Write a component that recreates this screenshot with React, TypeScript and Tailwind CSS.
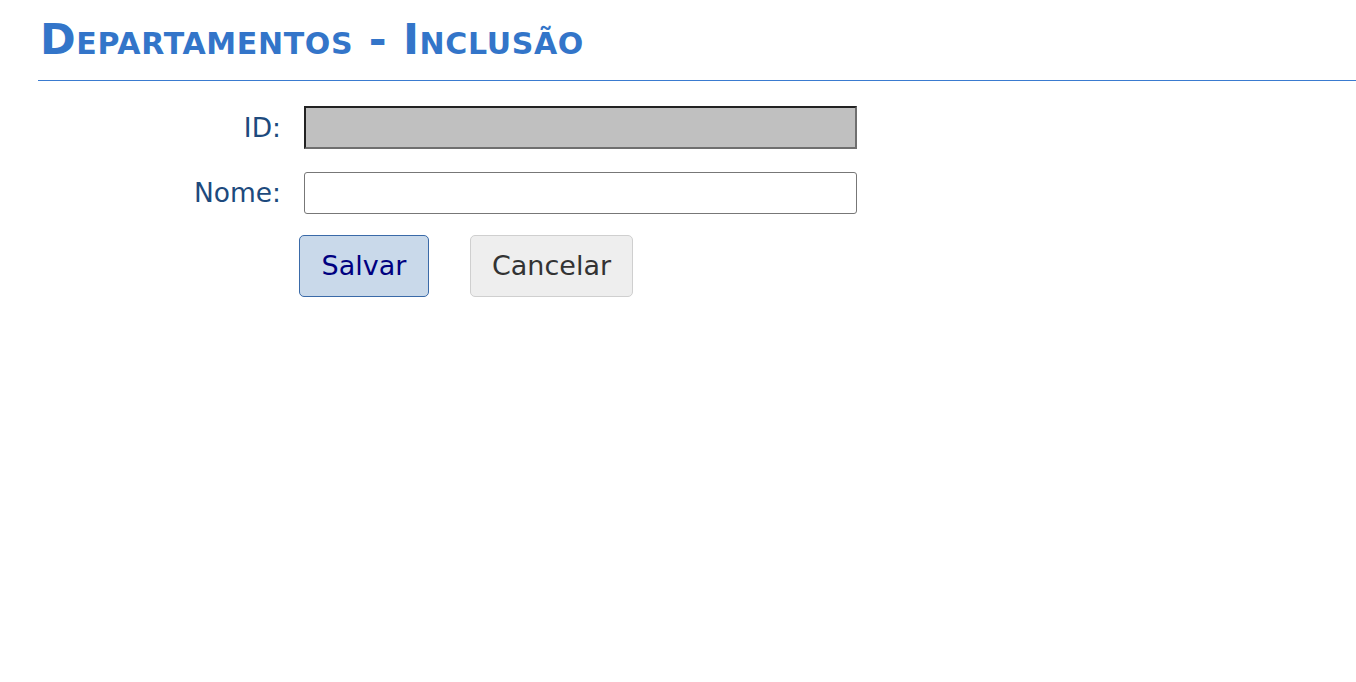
import React from 'react';

const App = () => {
  return (
    <div className="min-h-screen bg-white pl-[38px] pt-[13px]" style={{ fontFamily: '"DejaVu Sans", Verdana, sans-serif' }}>
      <h1 className="ml-[2px] text-[43px] font-bold leading-[52px] text-[#3375c9] [font-variant:small-caps] tracking-[0.65px]">
        Departamentos - Inclusão
      </h1>
      <div className="mt-[15px] border-t border-[#3a7bd0]" />

      <div className="mt-[25px] grid grid-cols-[243px_553px] items-center gap-x-[23px] gap-y-[23px]">
        <label className="text-right text-[26.5px] leading-[32px] text-[#1d4a7d]">ID:</label>
        <input
          disabled
          className="h-[43px] border-2 border-t-[#222] border-l-[#222] border-b-[#6f6f6f] border-r-[#6f6f6f] bg-[#c0c0c0]"
        />
        <label className="text-right text-[26.5px] leading-[32px] text-[#1d4a7d]">Nome:</label>
        <input className="h-[42px] rounded-[3px] border border-[#777] bg-white px-2 text-[20px] outline-none" />
      </div>

      <div className="mt-[21px] ml-[261px] flex gap-[41px]">
        <button className="h-[62px] w-[130px] rounded-[5px] border border-[#3a6aa8] bg-[#c9d9ea] text-[27px] text-[#000080]">
          Salvar
        </button>
        <button className="h-[62px] w-[163px] rounded-[5px] border border-[#cfcfcf] bg-[#eeeeee] text-[27px] text-[#333]">
          Cancelar
        </button>
      </div>
    </div>
  );
};

export default App;
